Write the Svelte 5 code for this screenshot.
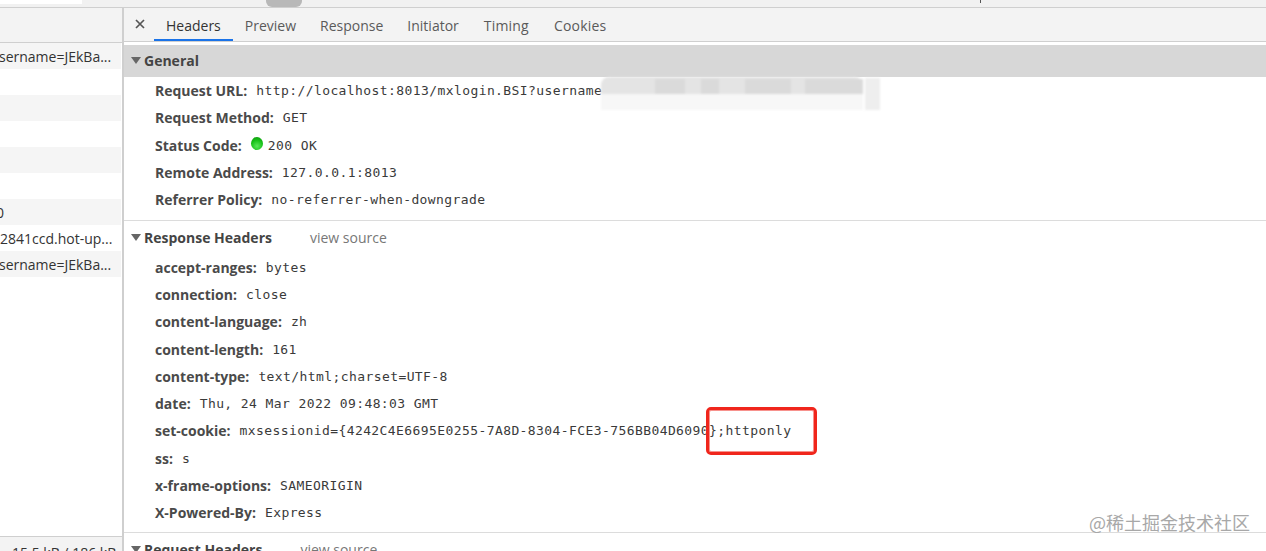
<script lang="ts">
  type Row = { name: string; value: string };

  const general: Row[] = [
    { name: "Request URL", value: "http://localhost:8013/mxlogin.BSI?username" },
    { name: "Request Method", value: "GET" },
    { name: "Status Code", value: "200 OK" },
    { name: "Remote Address", value: "127.0.0.1:8013" },
    { name: "Referrer Policy", value: "no-referrer-when-downgrade" }
  ];

  const response: Row[] = [
    { name: "accept-ranges", value: "bytes" },
    { name: "connection", value: "close" },
    { name: "content-language", value: "zh" },
    { name: "content-length", value: "161" },
    { name: "content-type", value: "text/html;charset=UTF-8" },
    { name: "date", value: "Thu, 24 Mar 2022 09:48:03 GMT" },
    { name: "set-cookie", value: "mxsessionid={4242C4E6695E0255-7A8D-8304-FCE3-756BB04D6090};httponly" },
    { name: "ss", value: "s" },
    { name: "x-frame-options", value: "SAMEORIGIN" },
    { name: "X-Powered-By", value: "Express" }
  ];

  const tabs = ["Headers", "Preview", "Response", "Initiator", "Timing", "Cookies"];

  // the list is scrolled sideways, so names are cut off on the left
  const files = [
    { text: "sername=JEkBa...", off: -1 },
    { text: "", off: 0 },
    { text: "", off: 0 },
    { text: "", off: 0 },
    { text: "", off: 0 },
    { text: "", off: 0 },
    { text: "0", off: -4 },
    { text: "2841ccd.hot-up...", off: 0 },
    { text: "sername=JEkBa...", off: -1 }
  ];

  // darker patches of the smudge over the blanked URL
  const patches = [
    { left: 54, width: 30 },
    { left: 100, width: 18 },
    { left: 144, width: 46 },
    { left: 204, width: 58 }
  ];
</script>

<div class="page">
  <div class="topstrip">
    <span class="edge"></span>
    <span class="thumb"></span>
    <span class="speck"></span>
  </div>
  <div class="panes">
    <aside class="files">
      <div class="fhead"></div>
      {#each files as f, i}
        <div class="frow" class:odd={i % 2 === 0} style="text-indent: {f.off}px">{f.text}</div>
      {/each}
      <div class="fspace"></div>
      <div class="ffoot">15.5 kB / 186 kB</div>
    </aside>
    <main class="detail">
      <nav class="tabbar">
        <span class="close">
          <svg width="10" height="10" viewBox="0 0 10 10">
            <path d="M1 1l8 8M9 1l-8 8" stroke="#555" stroke-width="1.7" fill="none" />
          </svg>
        </span>
        {#each tabs as t, i}
          <span class="tab" class:active={i === 0}>{t}</span>
        {/each}
      </nav>
      <section class="general">
        <h3 class="shead grey"><i class="tri"></i>General</h3>
        {#each general as r}
          <div class="row">
            <b>{r.name}:</b>
            {#if r.name === "Status Code"}<i class="dot"></i>{/if}
            <span class="val">{r.value}</span>
          </div>
        {/each}
        <div class="smudge">
          <div class="smudge-top">
            {#each patches as p}
              <span class="patch" style="left: {p.left}px; width: {p.width}px"></span>
            {/each}
          </div>
          <div class="smudge-low"></div>
          <div class="smudge-end"></div>
        </div>
      </section>
      <section class="resp">
        <h3 class="shead"><i class="tri"></i>Response Headers<span class="vs">view source</span></h3>
        {#each response as r}
          <div class="row">
            <b>{r.name}:</b>
            <span class="val">{r.value}</span>
          </div>
        {/each}
      </section>
      <section class="req">
        <h3 class="shead"><i class="tri"></i>Request Headers<span class="vs">view source</span></h3>
      </section>
      <div class="redbox"></div>
    </main>
  </div>
  <div class="mark">@稀土掘金技术社区</div>
</div>

<style>
  :global(body) {
    margin: 0;
    background: #fff;
  }

  .page {
    position: relative;
    width: 1266px;
    height: 551px;
    overflow: hidden;
    font-family: "Open Sans", "Noto Sans", sans-serif;
    color: #333;
  }

  .topstrip {
    position: relative;
    height: 7px;
    background: #f1f1f1;
    border-bottom: 1px solid #cfcfcf;
  }

  .edge {
    position: absolute;
    left: 0;
    top: 0;
    width: 82px;
    height: 4px;
    background: #fff;
  }

  .thumb {
    position: absolute;
    left: 266px;
    top: 0;
    width: 36px;
    height: 7px;
    background: #b8b8b8;
    border-radius: 0 0 6px 6px;
  }

  .speck {
    position: absolute;
    left: 980px;
    top: 0;
    width: 1px;
    height: 3px;
    background: #555;
  }

  .panes {
    display: flex;
    height: 543px;
  }

  .files {
    width: 122px;
    flex: none;
    display: flex;
    flex-direction: column;
    border-right: 2px solid #cfcfcf;
    font-size: 14px;
    color: #333;
  }

  .fhead {
    height: 34px;
    flex: none;
    background: #f3f3f3;
    border-bottom: 1px solid #cfcfcf;
  }

  .frow {
    height: 26px;
    flex: none;
    line-height: 28px;
    margin-right: 1px;
    white-space: nowrap;
    overflow: hidden;
  }

  .frow.odd {
    background: #f5f5f5;
  }

  .fspace {
    flex: 1;
  }

  .ffoot {
    height: 14px;
    flex: none;
    background: #f3f3f3;
    border-top: 1px solid #cfcfcf;
    font-size: 14px;
    line-height: 32px;
    padding-left: 12px;
    white-space: nowrap;
    overflow: hidden;
  }

  .detail {
    flex: 1;
    min-width: 0;
  }

  .tabbar {
    height: 33px;
    display: flex;
    align-items: stretch;
    background: #f3f3f3;
    border-bottom: 1px solid #cfcfcf;
    font-size: 14px;
    color: #5a5a5a;
  }

  .close {
    width: 30px;
    padding: 11px 0 0 11px;
    box-sizing: border-box;
    line-height: 0;
  }

  .tab {
    padding: 0 12px;
    line-height: 36px;
  }

  .tab:nth-child(6) {
    letter-spacing: 0.2px;
    padding-left: 13px;
  }

  .tab:nth-child(7) {
    letter-spacing: 0.2px;
    padding-left: 13px;
  }

  .tab.active {
    color: #333;
    box-shadow: inset 0 -2px 0 #1a73e8;
  }

  .general {
    position: relative;
    padding-top: 3px;
    padding-bottom: 7px;
    border-bottom: 1px solid #dcdcdc;
  }

  .shead {
    margin: 0;
    height: 32px;
    box-sizing: border-box;
    display: flex;
    align-items: center;
    padding: 0 0 2px 7px;
    font-size: 14px;
    font-weight: 700;
    color: #444;
  }

  .shead.grey {
    background: #d7d7d7;
  }

  .resp .shead,
  .req .shead {
    padding-bottom: 0;
  }

  .tri {
    width: 0;
    height: 0;
    margin-right: 3px;
    border-left: 5px solid transparent;
    border-right: 5px solid transparent;
    border-top: 7px solid #666;
  }

  .vs {
    margin-left: 38px;
    font-weight: 400;
    color: #777;
  }

  .row {
    display: flex;
    align-items: center;
    height: 27.3px;
    padding-left: 31px;
    white-space: nowrap;
    font-size: 14px;
  }

  .row b {
    font-weight: 700;
    color: #4a4a4a;
    margin-right: 9px;
  }

  .val {
    font-family: "DejaVu Sans Mono", monospace;
    font-size: 13px;
    letter-spacing: 0.41px;
    color: #3a3a3a;
  }

  .dot {
    width: 12px;
    height: 13px;
    margin-right: 5px;
    margin-top: -3px;
    border-radius: 50%;
    background: radial-gradient(circle at 50% 70%, #5be85b, #17c017 55%, #0c8f0c);
  }

  .smudge {
    position: absolute;
    left: 477px;
    top: 35px;
    width: 279px;
    height: 33px;
    filter: blur(1px);
  }

  .smudge-top {
    position: relative;
    height: 17px;
    width: 262px;
    background: #e4e4e4;
    border-radius: 8px 8px 0 0;
  }

  .patch {
    position: absolute;
    top: 2px;
    height: 15px;
    background: #dadada;
  }

  .smudge-low {
    height: 16px;
    width: 262px;
    background: #f7f7f7;
  }

  .smudge-end {
    position: absolute;
    right: 0;
    top: 1px;
    width: 15px;
    height: 32px;
    background: #eeeeee;
  }

  .resp {
    padding-bottom: 6px;
    border-bottom: 1px solid #dcdcdc;
  }

  .redbox {
    position: absolute;
    left: 706px;
    top: 407px;
    width: 105px;
    height: 42px;
    border: 3px solid #f0261c;
    outline: 1px solid rgba(240, 38, 28, 0.5);
    outline-offset: -4px;
    border-radius: 5px;
  }

  .mark {
    position: absolute;
    right: 16px;
    top: 509px;
    font-family: "Noto Sans CJK SC", sans-serif;
    font-size: 18px;
    color: #a8a8a8;
  }
</style>
